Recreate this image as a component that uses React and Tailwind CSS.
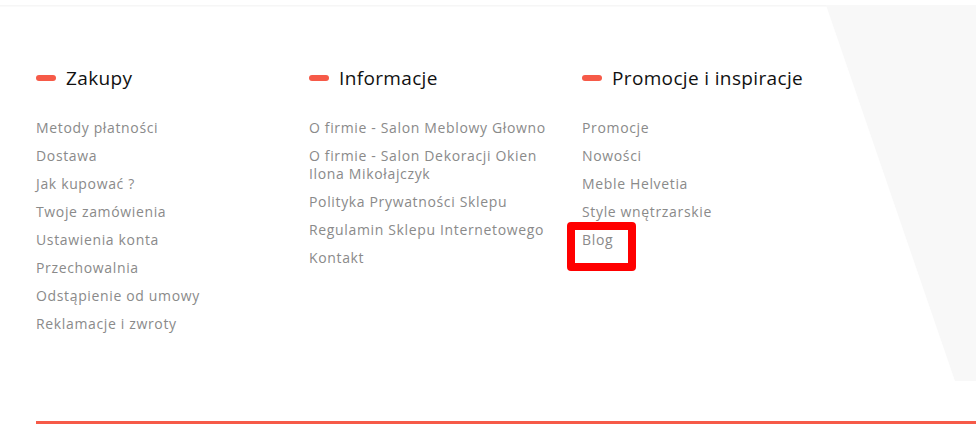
const columns = [
  {
    title: 'Zakupy',
    links: [
      'Metody płatności',
      'Dostawa',
      'Jak kupować ?',
      'Twoje zamówienia',
      'Ustawienia konta',
      'Przechowalnia',
      'Odstąpienie od umowy',
      'Reklamacje i zwroty',
    ],
  },
  {
    title: 'Informacje',
    links: [
      'O firmie - Salon Meblowy Głowno',
      ['O firmie - Salon Dekoracji Okien', 'Ilona Mikołajczyk'],
      'Polityka Prywatności Sklepu',
      'Regulamin Sklepu Internetowego',
      'Kontakt',
    ],
  },
  {
    title: 'Promocje i inspiracje',
    links: ['Promocje', 'Nowości', 'Meble Helvetia', 'Style wnętrzarskie', 'Blog'],
    marked: 'Blog',
  },
];

const FooterColumn = ({ title, links, marked }) => (
  <div className="w-[273px]">
    <div className="flex items-center gap-[10px] h-6">
      <span className="w-5 h-[6px] rounded-full bg-[#f65a48]" />
      <h3 className="text-[19px] leading-6 tracking-[0.35px] text-[#111]">{title}</h3>
    </div>
    <ul className="mt-[29px] flex flex-col gap-[10px]">
      {links.map((link, i) => {
        const lines = Array.isArray(link) ? link : [link];
        return (
          <li key={i} className="relative text-[14px] leading-[18px] tracking-[0.65px] text-[#8a8a8a]">
            {lines.map((l, j) => (
              <span key={j} className="block">{l}</span>
            ))}
            {marked === link && (
              <span className="absolute -left-[15px] -top-[9px] w-[69px] h-[49px] border-[8px] border-[#ff0000] rounded-[4px]" />
            )}
          </li>
        );
      })}
    </ul>
  </div>
);

export default function App() {
  return (
    <div
      className="relative w-full h-[424px] overflow-hidden bg-white"
      style={{ fontFamily: '"Open Sans", "Liberation Sans", sans-serif' }}
    >
      {/* decorative slanted background */}
      <svg className="absolute inset-0 w-full h-full" viewBox="0 0 976 424" preserveAspectRatio="none">
        <rect x="0" y="5" width="976" height="1.5" fill="#f6f6f6" />
        <polygon points="826,5 976,5 976,381 955,381" fill="#f8f8f8" />
      </svg>

      <div className="relative flex pl-[36px] pt-[66px]">
        {columns.map((c) => (
          <FooterColumn key={c.title} {...c} />
        ))}
      </div>

      <div className="absolute left-[36px] right-0 bottom-0 h-[3px] bg-[#f65a48]" />
    </div>
  );
}
